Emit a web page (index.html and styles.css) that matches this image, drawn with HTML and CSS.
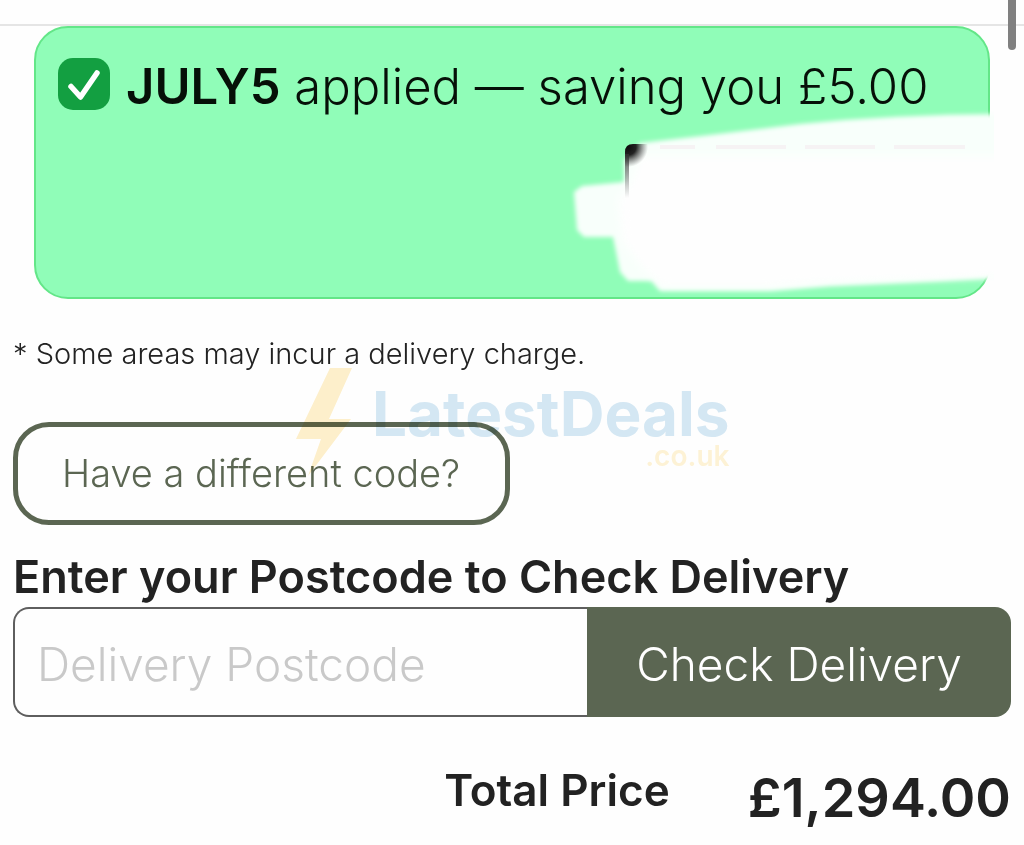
FILE: index.html
```
<!DOCTYPE html>
<html lang="en">
<head>
<meta charset="utf-8">
<meta name="viewport" content="width=device-width, initial-scale=1">
<title>Basket</title>
<link rel="stylesheet" href="styles.css">
</head>
<body>
<div class="scroll-thumb"></div>
<main class="basket">
  <section class="promo">
    <p class="promo-text">
      <svg class="promo-tick" viewBox="0 0 52 52" aria-hidden="true">
        <rect width="52" height="52" rx="15" fill="#139f41"/>
        <path d="M13 28.500 22.500 39 39 15" fill="none" stroke="#fff" stroke-width="5.500" stroke-linecap="round" stroke-linejoin="round"/>
      </svg>
      <span><strong>JULY5</strong> applied — saving you £5.00</span>
    </p>
    <svg class="promo-smudge" viewBox="570 100 424 200" aria-hidden="true">
      <defs>
        <filter id="soft" x="-10%" y="-10%" width="120%" height="120%"><feGaussianBlur stdDeviation="2"/></filter>
        <filter id="softer" x="-50%" y="-50%" width="200%" height="200%"><feGaussianBlur stdDeviation="4"/></filter>
        <radialGradient id="corner" gradientUnits="userSpaceOnUse" cx="628" cy="147" r="20">
          <stop offset="0" stop-color="#0c0c0c"/>
          <stop offset="0.400" stop-color="#222"/>
          <stop offset="1" stop-color="#555" stop-opacity="0"/>
        </radialGradient>
        <linearGradient id="edge" x1="0" y1="0" x2="0" y2="1">
          <stop offset="0" stop-color="#333" stop-opacity="0.800"/>
          <stop offset="1" stop-color="#333" stop-opacity="0"/>
        </linearGradient>
      </defs>
      <path d="M640 143 Q720 134 800 124 Q900 114 1010 114V277L940 281 830 286 770 291H660L652 281H628L620 272 613 237H584L577 230 574 192 582 186 624 182V160Z" fill="#f8fffb" filter="url(#soft)"/>
      <path d="M640 156H1010V276L830 282 770 286H662L642 268 622 240 618 200 632 180Z" fill="#fefefe" filter="url(#softer)"/>
      <path d="M660 147H695M716 147H786M805 147H875M894 147H965" stroke="#f6f3f4" stroke-width="4"/>
      <path d="M625 170V152Q625 144 633 144H650V170Z" fill="url(#corner)"/>
      <path d="M625 154H629V198H625Z" fill="url(#edge)"/>
    </svg>
  </section>

  <p class="note">* Some areas may incur a delivery charge.</p>
  <div class="code-row">
    <button class="code-button" type="button">Have a different code?</button>
    <div class="watermark">
      <svg class="bolt" viewBox="0 0 56 108" aria-hidden="true"><path d="M34 0H56L33 51H55L12 108 25 71H0Z" fill="#fef0cc"/></svg>
      <div class="watermark-text">
        <div class="watermark-name">LatestDeals</div>
        <div class="watermark-tld">.co.uk</div>
      </div>
    </div>
  </div>

  <form class="postcode">
    <label class="postcode-label" for="postcode">Enter your Postcode to Check Delivery</label>
    <div class="postcode-row">
      <input class="postcode-input" id="postcode" type="text" placeholder="Delivery Postcode">
      <button class="postcode-button" type="button">Check Delivery</button>
    </div>
  </form>

  <div class="total">
    <span class="total-label">Total Price</span>
    <span class="total-value">£1,294.00</span>
  </div>
</main>
</body>
</html>
```
FILE: styles.css
```
* {
  box-sizing: border-box;
}

body {
  margin: 0;
  overflow-x: hidden;
  background: #fefefe;
  color: #222;
  font-family: Inter, "Liberation Sans", sans-serif;
  font-weight: 300;
}

p {
  margin: 0;
}

button,
input {
  margin: 0;
  font: inherit;
}

.scroll-thumb {
  position: absolute;
  top: 0;
  right: 8px;
  width: 8px;
  height: 50px;
  border-radius: 0 0 4px 4px;
  background: #808080;
}

.basket {
  margin-top: 24px;
  padding: 0 13px;
  border-top: 2px solid #e5e5e5;
}

.promo {
  position: relative;
  min-height: 273px;
  margin: 0 21px;
  padding: 24px 22px;
  border: 2px solid #63e688;
  border-radius: 34px;
  background: #90fdb8;
  color: #061008;
}

.promo-text {
  display: flex;
  align-items: flex-start;
  gap: 16px;
  font-size: 49px;
  line-height: 70px;
  white-space: nowrap;
}

.promo-text strong {
  font-weight: 600;
}

.promo-tick {
  flex: none;
  width: 52px;
  height: 52px;
  margin-top: 6px;
}

.promo-smudge {
  position: absolute;
  top: 72px;
  right: -6px;
  width: 424px;
  height: 200px;
}

.note {
  margin-top: 35px;
  font-size: 29px;
  line-height: 40px;
}

.code-row {
  position: relative;
  margin-top: 48px;
}

.code-button {
  padding: 24px 45px 24px 44px;
  border: 5px solid #5b6652;
  border-radius: 36px;
  background: transparent;
  color: #5b6652;
  font-size: 38px;
  line-height: 45px;
  white-space: nowrap;
}

.watermark {
  position: absolute;
  top: -54px;
  left: 283px;
  display: flex;
  gap: 20px;
  mix-blend-mode: multiply;
  pointer-events: none;
}

.bolt {
  width: 56px;
  height: 108px;
}

.watermark-text {
  padding-top: 8px;
  font-weight: 700;
}

.watermark-name {
  color: #d5e8f4;
  font-size: 62px;
  line-height: 76px;
}

.watermark-tld {
  color: #fef3d6;
  font-size: 28px;
  font-weight: 600;
  line-height: 8px;
  text-align: right;
}

.postcode {
  margin-top: 26px;
}

.postcode-label {
  display: block;
  padding-bottom: 4px;
  font-size: 45px;
  font-weight: 600;
  line-height: 52px;
  white-space: nowrap;
}

.postcode-row {
  display: flex;
  height: 110px;
}

.postcode-input {
  flex: 1;
  min-width: 0;
  padding: 4px 22px 0;
  border: 2px solid #5e5e5e;
  border-right: 0;
  border-radius: 16px 0 0 16px;
  background: #fefefe;
  color: #222;
  font-size: 46px;
}

.postcode-input::placeholder {
  color: #c9c9c9;
  opacity: 1;
}

.postcode-button {
  flex: 0 0 424px;
  padding: 4px 0 0;
  border: 0;
  border-radius: 0 16px 16px 0;
  background: #5b6652;
  color: #fff;
  font-size: 46px;
}

.total {
  display: flex;
  justify-content: flex-end;
  align-items: flex-start;
  gap: 78px;
  margin-top: 43px;
  font-weight: 600;
  white-space: nowrap;
}

.total-label {
  font-size: 44px;
  line-height: 60px;
}

.total-value {
  font-size: 54px;
  line-height: 76px;
}
```
